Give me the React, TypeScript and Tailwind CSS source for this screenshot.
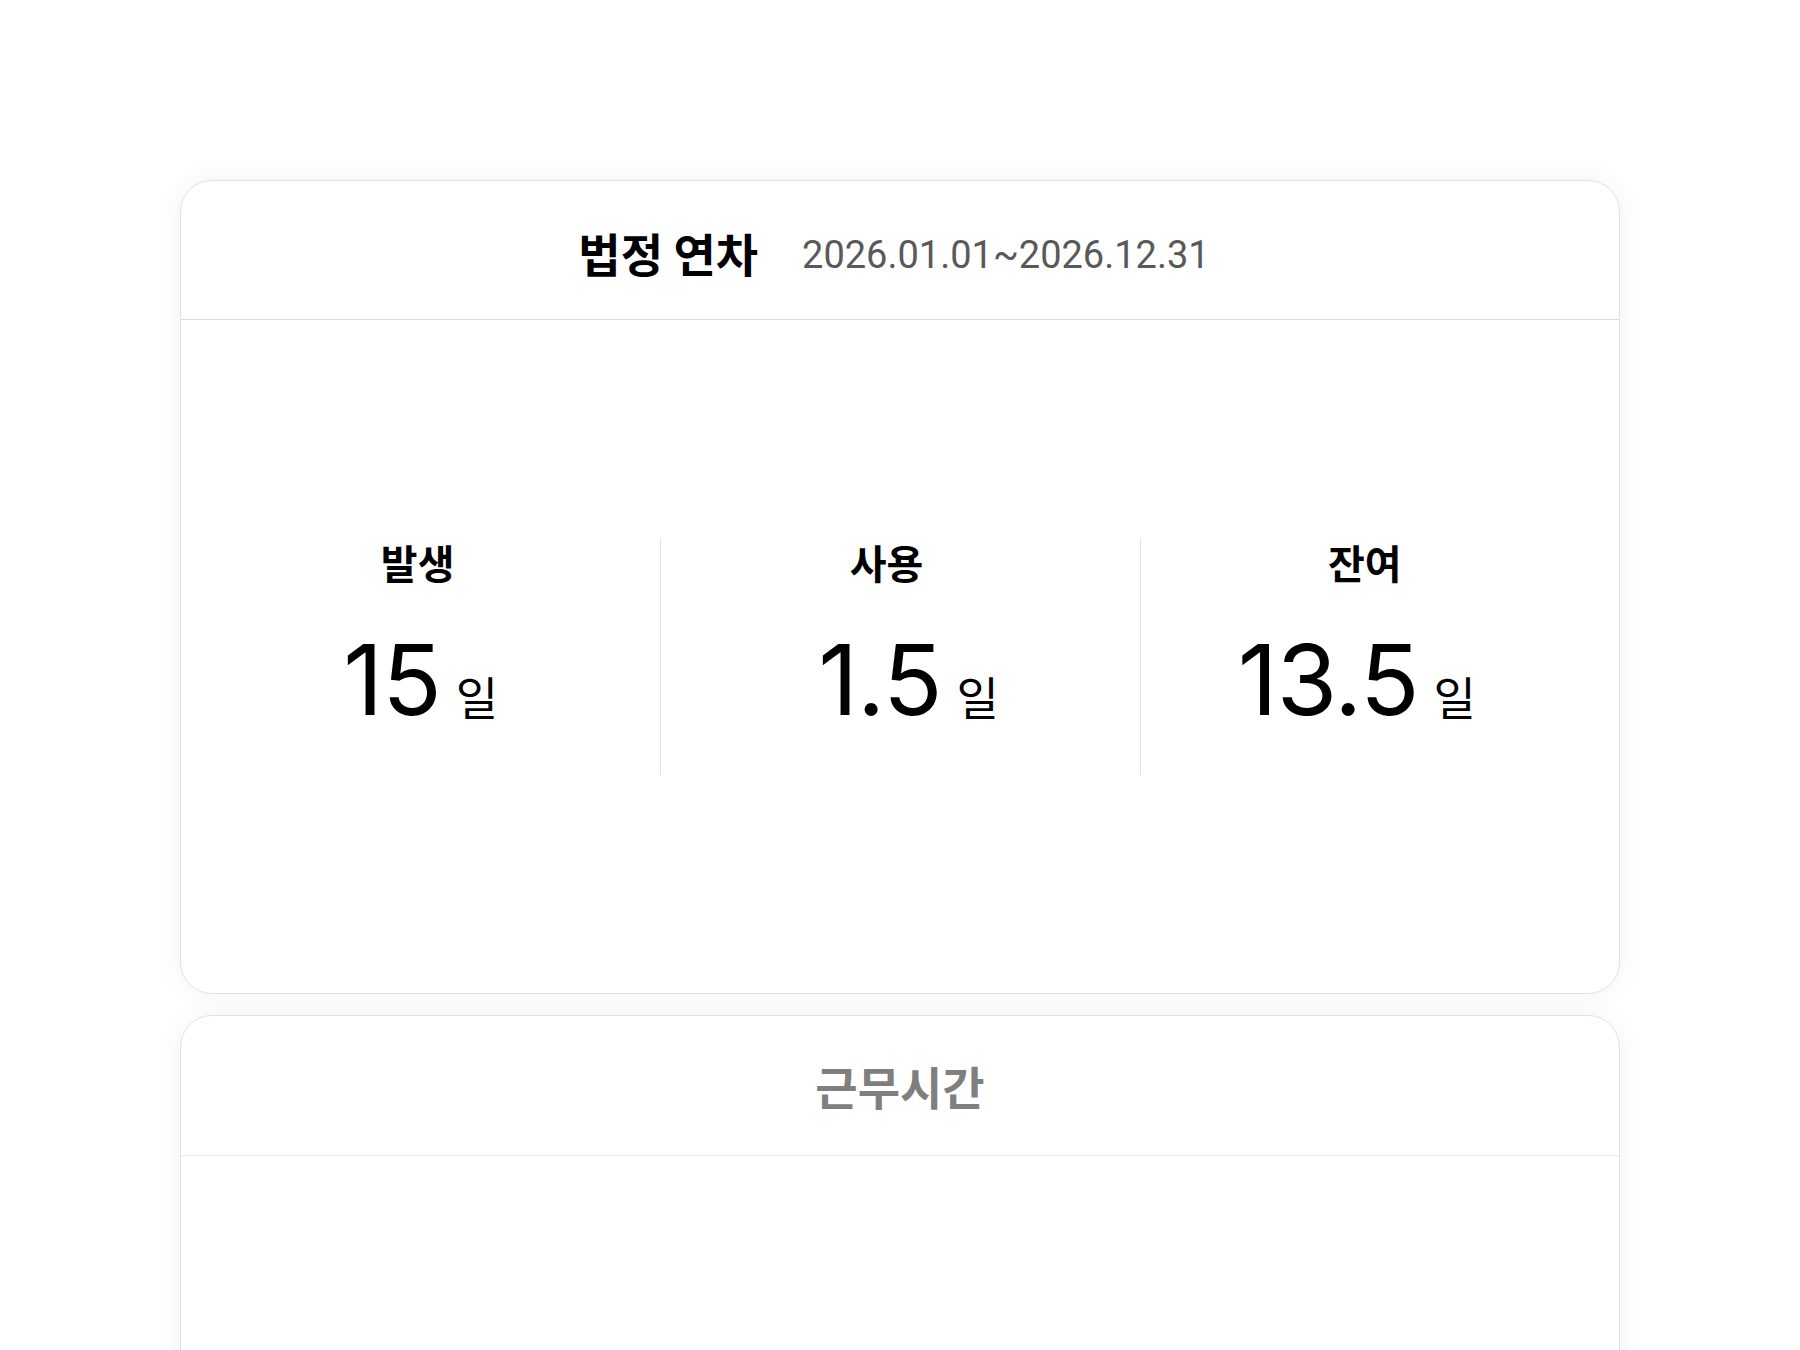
import React from "react";

const KR = '"Noto Sans CJK KR", "Noto Sans", sans-serif';
const NUM = 'Inter, "Noto Sans CJK KR", sans-serif';
const DATE = 'Roboto, "Noto Sans CJK KR", sans-serif';

function Stat({
  label,
  value,
  labelCls,
  valueCls,
}: {
  label: string;
  value: string;
  labelCls: string;
  valueCls: string;
}) {
  return (
    <div className="flex flex-col items-center">
      <div
        className={"text-[40px] font-bold leading-[48px] text-black " + labelCls}
        style={{ fontFamily: KR }}
      >
        {label}
      </div>
      <div className={"mt-[45px] flex items-baseline gap-[15px] text-black " + valueCls}>
        <span
          className="text-[98px] leading-[98px] font-normal tracking-[-1px]"
          style={{ fontFamily: NUM }}
        >
          {value}
        </span>
        <span className="text-[46px] leading-[48px]" style={{ fontFamily: KR }}>
          일
        </span>
      </div>
    </div>
  );
}

export default function App() {
  return (
    <div className="min-h-[1350px] w-full bg-white pt-[180px]">
      <div className="mx-auto flex w-[1440px] flex-col gap-[21px]">
        <div className="flex h-[814px] flex-col overflow-hidden rounded-[32px] border border-[#e2e2e2] bg-white shadow-[0_0_28px_rgba(0,0,0,0.05)]">
          <div className="flex h-[139px] shrink-0 items-center justify-center gap-[44px] border-b border-[#dedede] pt-[4px] pr-[12px]">
            <span className="text-[46px] font-bold text-black" style={{ fontFamily: KR }}>
              법정 연차
            </span>
            <span className="mt-[7px] text-[38px] text-[#595959]" style={{ fontFamily: DATE }}>
              2026.01.01~2026.12.31
            </span>
          </div>
          <div className="flex flex-1 items-center">
            <div className="grid h-[237px] w-full grid-cols-3">
              <div className="flex h-full items-start justify-center">
                <Stat label="발생" value="15" labelCls="mr-[6px]" valueCls="" />
              </div>
              <div className="flex h-full items-start justify-center border-l border-[#e3e3e3]">
                <Stat label="사용" value="1.5" labelCls="mr-[28px]" valueCls="ml-[16px]" />
              </div>
              <div className="flex h-full items-start justify-center border-l border-[#e3e3e3]">
                <Stat label="잔여" value="13.5" labelCls="mr-[30px]" valueCls="mr-[46px]" />
              </div>
            </div>
          </div>
        </div>
        <div className="flex h-[400px] flex-col overflow-hidden rounded-[32px] border border-[#e2e2e2] bg-white shadow-[0_0_28px_rgba(0,0,0,0.05)]">
          <div className="flex h-[140px] shrink-0 items-center justify-center border-b border-[#e6e6e6]">
            <span className="text-[46px] font-bold text-[#7f7f7f]" style={{ fontFamily: KR }}>
              근무시간
            </span>
          </div>
        </div>
      </div>
    </div>
  );
}
